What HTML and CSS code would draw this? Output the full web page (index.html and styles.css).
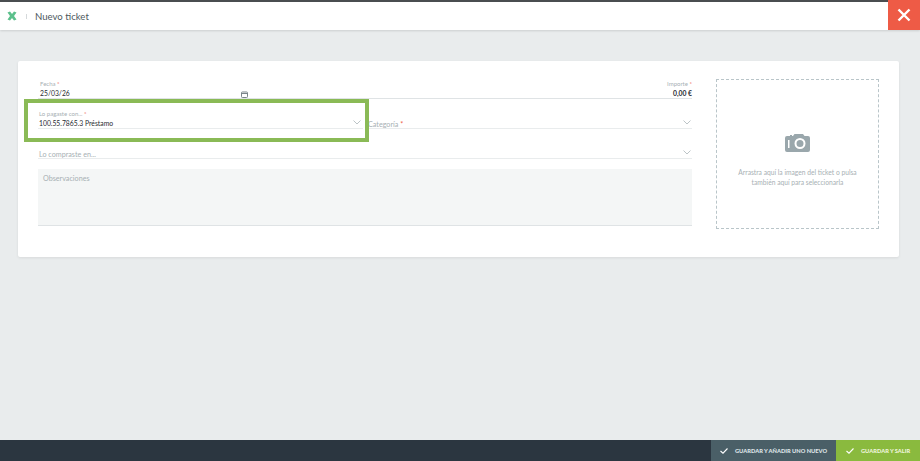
FILE: index.html
```html
<!DOCTYPE html>
<html lang="es">

<head>
  <meta charset="UTF-8">
  <title>Nuevo ticket</title>
  <link rel="stylesheet" href="styles.css">
</head>

<body>
  <header class="topbar">
    <svg class="logo" width="10" height="10" viewBox="0 0 10 10">
      <path d="M0.5 1.5 L3 0.5 L5 3 L7 0.5 L9.5 1.5 L7 5 L9.5 8.5 L7 9.5 L5 7 L3 9.5 L0.5 8.5 L3 5 Z" fill="#5cc08c" />
    </svg>
    <span class="crumb-sep"></span>
    <h1 class="title">Nuevo ticket</h1>
    <button class="close">
      <svg width="14" height="14" viewBox="0 0 14 14">
        <path d="M1.5 1.5 L12.5 12.5 M12.5 1.5 L1.5 12.5" stroke="#fff" stroke-width="2.4" />
      </svg>
    </button>
  </header>

  <main class="content">
    <section class="card">
      <form class="form">
        <div class="row-date">
          <div class="date-field">
            <span class="small-label">Fecha <i class="req">*</i></span>
            <span class="value">25/03/26</span>
            <svg class="cal" width="7" height="7" viewBox="0 0 7 7">
              <rect x="0.5" y="1" width="6" height="5.5" rx="0.8" fill="none" stroke="#7b858a" />
              <path d="M0.5 2.5 H6.5" stroke="#7b858a" />
            </svg>
          </div>
          <div class="amount-field">
            <span class="small-label">Importe <i class="req">*</i></span>
            <span class="value bold">0,00 €</span>
          </div>
        </div>

        <div class="row-selects">
          <div class="select paid">
            <div class="select-text">
              <span class="small-label">Lo pagaste con... <i class="req">*</i></span>
              <span class="value">100.55.7865.3 Préstamo</span>
            </div>
            <svg class="chev" width="8" height="5" viewBox="0 0 8 5">
              <path d="M0.5 0.5 L4 4 L7.5 0.5" fill="none" stroke="#bcc4c7" />
            </svg>
            <div class="highlight"></div>
          </div>
          <div class="select category">
            <span class="placeholder">Categoría <i class="req">*</i></span>
            <svg class="chev" width="8" height="5" viewBox="0 0 8 5">
              <path d="M0.5 0.5 L4 4 L7.5 0.5" fill="none" stroke="#bcc4c7" />
            </svg>
          </div>
        </div>

        <div class="select shop">
          <span class="placeholder">Lo compraste en...</span>
          <svg class="chev" width="8" height="5" viewBox="0 0 8 5">
            <path d="M0.5 0.5 L4 4 L7.5 0.5" fill="none" stroke="#bcc4c7" />
          </svg>
        </div>

        <div class="notes">Observaciones</div>
      </form>

      <div class="dropzone">
        <svg width="25" height="18" viewBox="0 0 25 18">
          <path fill-rule="evenodd" fill="#9aa7ac"
            d="M2 2 H5 V1 H7 V2 H8 L9.5 0 H18 L19.5 2 H23 Q25 2 25 4 V16 Q25 18 23 18 H2 Q0 18 0 16 V4 Q0 2 2 2 Z M3 6 V14 H4.500 V6 Z M15 4 A5.500 5.500 0 1 0 15 15 A5.500 5.500 0 1 0 15 4 Z M15 6 A3.500 3.500 0 1 1 15 13 A3.500 3.500 0 1 1 15 6 Z" />
        </svg>
        <p class="drop-text">Arrastra aquí la imagen del ticket o pulsa también aquí para seleccionarla</p>
      </div>
    </section>
  </main>

  <footer class="footer">
    <button class="btn btn-dark">
      <svg width="8" height="6" viewBox="0 0 8 6">
        <path d="M0.5 3 L3 5.200 L7.500 0.500" fill="none" stroke="#fff" stroke-width="1.100" />
      </svg>
      Guardar y añadir uno nuevo
    </button>
    <button class="btn btn-green">
      <svg width="8" height="6" viewBox="0 0 8 6">
        <path d="M0.5 3 L3 5.200 L7.500 0.500" fill="none" stroke="#fff" stroke-width="1.100" />
      </svg>
      Guardar y salir
    </button>
  </footer>
</body>

</html>
```

FILE: styles.css
```css
html,
body {
  height: 100%;
  margin: 0;
  padding: 0;
}

body {
  display: flex;
  flex-direction: column;
  background: #e9eced;
  font-family: Lato, "Noto Sans", sans-serif;
  color: #1f2a30;
}

.topbar {
  display: flex;
  align-items: center;
  height: 28px;
  flex-shrink: 0;
  border-top: 2px solid #4a4d50;
  background: #fff;
  box-shadow: 0 1px 2px rgba(0, 0, 0, 0.12);
}

.logo {
  margin-left: 7px;
}

.crumb-sep {
  width: 1px;
  height: 5px;
  margin-left: 9px;
  background: #d5d9db;
}

.title {
  margin: 0 0 0 8px;
  font-size: 9.6px;
  font-weight: 400;
  color: #4d585e;
}

.close {
  display: flex;
  align-items: center;
  justify-content: center;
  width: 32px;
  height: 30px;
  margin: -2px 0 0 auto;
  padding: 0;
  border: 0;
  background: #ee5b46;
}

.content {
  flex: 1;
  padding: 31px 21px 0 18px;
}

.card {
  display: flex;
  gap: 24px;
  height: 196px;
  box-sizing: border-box;
  padding: 18px 20px 0 20px;
  border-radius: 2px;
  background: #fff;
  box-shadow: 0 1px 3px rgba(0, 0, 0, 0.08);
}

.form {
  display: flex;
  flex-direction: column;
  flex: 1;
  min-width: 0;
}

.small-label {
  display: block;
  font-size: 6px;
  line-height: 8px;
  color: #a7b0b4;
}

.req {
  font-style: normal;
  color: #ee5b46;
}

.value {
  display: block;
  font-size: 6.8px;
  line-height: 10px;
  color: #1f2a30;
}

.bold {
  font-weight: 700;
}

.row-date {
  display: flex;
  justify-content: space-between;
  height: 20px;
  box-sizing: border-box;
  padding-top: 1px;
  border-bottom: 1px solid #dfe3e5;
}

.date-field {
  position: relative;
  width: 208px;
  padding-left: 2px;
}

.cal {
  position: absolute;
  right: 0;
  top: 11px;
}

.amount-field {
  text-align: right;
}

.row-selects {
  display: flex;
  gap: 5px;
  margin-top: 8px;
}

.select {
  display: flex;
  align-items: flex-end;
  justify-content: space-between;
  box-sizing: border-box;
  border-bottom: 1px solid #e9eced;
}

.paid {
  position: relative;
  width: 325px;
  height: 22px;
  padding-left: 1px;
}

.paid .chev {
  margin: 0 2px 3px 0;
}

.highlight {
  position: absolute;
  left: -14px;
  right: -6px;
  top: -8px;
  bottom: -14px;
  border: 4px solid #8aba56;
}

.category {
  flex: 1;
  height: 22px;
}

.placeholder {
  margin-bottom: -2px;
  font-size: 7.2px;
  line-height: 10px;
  color: #a7b0b4;
}

.chev {
  margin: 0 1px 3px 0;
}

.shop {
  height: 14px;
  margin-top: 16px;
  padding-left: 1px;
}

.notes {
  height: 57px;
  box-sizing: border-box;
  margin-top: 10px;
  padding: 5px 5px;
  border-bottom: 1px solid #dfe3e5;
  background: #f4f6f6;
  font-size: 7.2px;
  color: #a7b0b4;
}

.dropzone {
  display: flex;
  flex-direction: column;
  align-items: center;
  justify-content: center;
  width: 163px;
  height: 150px;
  flex-shrink: 0;
  box-sizing: border-box;
  padding-top: 13px;
  border: 1px dashed #b9c5c9;
}

.drop-text {
  width: 130px;
  margin: 16px 0 0;
  font-size: 6.7px;
  line-height: 9.5px;
  text-align: center;
  color: #a7b0b4;
}

.footer {
  display: flex;
  justify-content: flex-end;
  height: 21px;
  flex-shrink: 0;
  background: #2b3640;
}

.btn {
  display: flex;
  align-items: center;
  gap: 7px;
  height: 100%;
  border: 0;
  font-family: inherit;
  font-size: 5.7px;
  font-weight: 900;
  text-transform: uppercase;
  white-space: nowrap;
}

.btn-dark {
  width: 125px;
  padding: 0 0 0 9px;
  background: #4a5f67;
  color: #dfe5e7;
}

.btn-green {
  width: 84px;
  padding: 0 0 0 10px;
  background: #8aba3e;
  color: #eef5dc;
}
```
